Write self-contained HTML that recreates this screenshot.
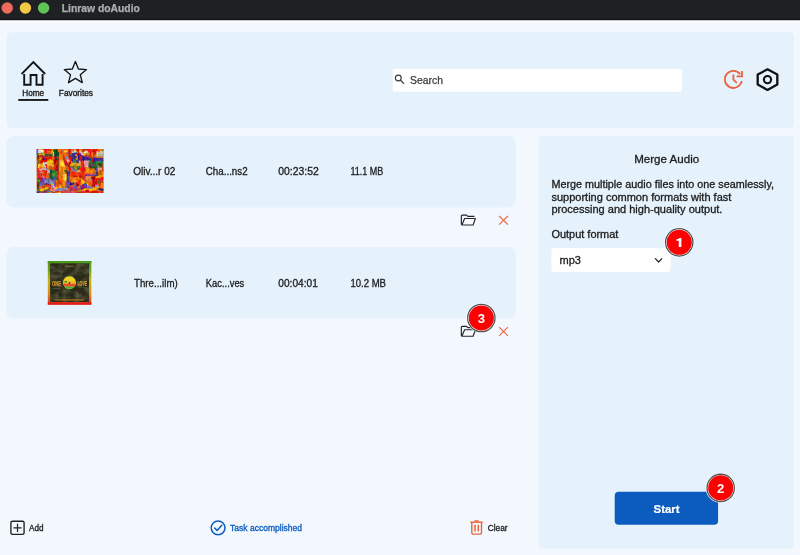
<!DOCTYPE html>
<html><head><meta charset="utf-8">
<style>
html,body{margin:0;padding:0;background:#f3f8fe;overflow:hidden}
svg{display:block;will-change:transform;opacity:0.9999}
text{font-family:"Liberation Sans",sans-serif}
</style></head>
<body>
<svg width="800" height="555" viewBox="0 0 800 555">
<defs>
<filter id="bl" x="-5%" y="-5%" width="110%" height="110%" color-interpolation-filters="sRGB">
<feTurbulence type="fractalNoise" baseFrequency="0.13 0.1" numOctaves="2" seed="11" result="d"/>
<feDisplacementMap in="SourceGraphic" in2="d" scale="5" xChannelSelector="R" yChannelSelector="G" result="dm"/>
<feGaussianBlur in="dm" stdDeviation="0.55" result="b"/>
<feTurbulence type="fractalNoise" baseFrequency="0.3 0.22" numOctaves="2" seed="7" result="n"/>
<feColorMatrix in="n" type="matrix" values="2.2 0 0 0 -0.6  0 2.2 0 0 -0.6  0 0 2.2 0 -0.6  0 0 0 0 1" result="n2"/>
<feComposite in="b" in2="n2" operator="arithmetic" k1="0" k2="1" k3="0.3" k4="-0.17"/>
</filter>
<clipPath id="c1"><rect x="0" y="0" width="67" height="44"/></clipPath>
<linearGradient id="gb" x1="0" y1="0" x2="0" y2="1">
<stop offset="0" stop-color="#4c9a1c"/><stop offset="0.2" stop-color="#6ea01c"/><stop offset="0.45" stop-color="#c8b41c"/><stop offset="0.75" stop-color="#e08a18"/><stop offset="0.93" stop-color="#e4481a"/><stop offset="1" stop-color="#e01818"/>
</linearGradient>
<linearGradient id="gt" x1="0" y1="0" x2="0" y2="1">
<stop offset="0" stop-color="#7a8c20"/><stop offset="0.3" stop-color="#c8b020"/><stop offset="0.6" stop-color="#e89a20"/><stop offset="1" stop-color="#e44420"/>
</linearGradient>
<clipPath id="cc"><circle cx="69.45" cy="282.5" r="6.3"/></clipPath>
<filter id="tx" x="0" y="0" width="100%" height="100%" color-interpolation-filters="sRGB">
<feTurbulence type="fractalNoise" baseFrequency="0.16" numOctaves="2" seed="3" result="n"/>
<feColorMatrix in="n" type="matrix" values="0 0 0 0 0.42  0 0 0 0 0.42  0 0 0 0 0.32  1.6 0 0 0 -0.62"/>
<feComposite in2="SourceGraphic" operator="in"/>
</filter>
</defs>
<!-- background -->
<rect x="0" y="0" width="800" height="555" fill="#f3f8fe"/>
<!-- title bar -->
<rect x="0" y="0" width="800" height="20.4" fill="#1f2023"/>
<rect x="0" y="18.6" width="800" height="1.8" fill="#141517"/>
<rect x="0" y="20.4" width="800" height="1.6" fill="#ffffff"/>
<circle cx="7.2" cy="8" r="5.7" fill="#ed6a5e"/>
<circle cx="25.4" cy="8" r="5.7" fill="#f6c944"/>
<circle cx="43.6" cy="8" r="5.7" fill="#5fc454"/>
<text x="61.7" y="11.8" font-size="10.3" font-weight="bold" fill="#adaeb1" stroke="#adaeb1" stroke-width="0.25" textLength="78.2" lengthAdjust="spacingAndGlyphs">Linraw doAudio</text>
<!-- panels -->
<rect x="6.5" y="32.3" width="787.4" height="95.7" rx="4.5" fill="#e5f2fc"/>
<rect x="6.5" y="136" width="509.3" height="71.6" rx="7" fill="#e5f2fc"/>
<rect x="6.5" y="247" width="509.3" height="71.5" rx="7" fill="#e5f2fc"/>
<rect x="539" y="136" width="254.9" height="412.5" rx="3" fill="#e5f2fc"/>

<!-- header icons -->
<g fill="none" stroke="#141414" stroke-width="1.9" stroke-linejoin="miter" stroke-linecap="square">
<path d="M22.2,73.3 L33.35,62 L44.5,73.3"/>
<path d="M24.2,74 V84.7 H30.6 V75 H36.5 V84.7 H42.6 V74" stroke-linecap="butt"/>
</g>
<polygon points="75.40,61.50 78.43,69.04 86.53,69.58 80.30,74.79 82.28,82.67 75.40,78.35 68.52,82.67 70.50,74.79 64.27,69.58 72.37,69.04" fill="none" stroke="#141414" stroke-width="1.35" stroke-linejoin="round"/>
<text x="22.2" y="95.8" font-size="8.2" fill="#1a1a1a" stroke="#1a1a1a" stroke-width="0.33" textLength="22" lengthAdjust="spacingAndGlyphs">Home</text>
<text x="58.8" y="95.8" font-size="8.2" fill="#1a1a1a" stroke="#1a1a1a" stroke-width="0.33" textLength="34.2" lengthAdjust="spacingAndGlyphs">Favorites</text>
<rect x="18.3" y="99" width="30" height="1.9" fill="#1a1a1a"/>
<!-- search -->
<rect x="392.7" y="68.7" width="289.2" height="23.1" rx="3" fill="#ffffff"/>
<circle cx="398.3" cy="78" r="2.9" fill="none" stroke="#3a3a3a" stroke-width="1.15"/>
<path d="M400.5,80.2 L403.7,83.4" stroke="#3a3a3a" stroke-width="1.25" stroke-linecap="round"/>
<text x="410" y="84.3" font-size="10.5" fill="#3c3c3c" stroke="#3c3c3c" stroke-width="0.25" textLength="33" lengthAdjust="spacingAndGlyphs">Search</text>
<!-- clock icon -->
<g fill="none" stroke="#e8633c" stroke-width="1.8" stroke-linecap="butt">
<path d="M741.76,81.18 A8.55,8.55 0 1 1 740.14,74.14"/>
<path d="M742,70.9 V76.3 H736.6" stroke-linejoin="miter"/>
<path d="M733.4,74.4 V79.6 L736.8,82.8"/>
</g>
<!-- hex icon -->
<g fill="none" stroke="#111" stroke-width="2.3" stroke-linejoin="round">
<polygon points="767.5,69.3 777.3,74.6 777.3,84.6 767.5,89.9 757.7,84.6 757.7,74.6"/>
<circle cx="767.5" cy="79.6" r="3.6" stroke-width="2.1"/>
</g>


<!-- thumb 1: painting -->
<g transform="translate(36.6,149.1)" clip-path="url(#c1)">
<g filter="url(#bl)">
<rect x="-2" y="-2" width="71" height="48" fill="#ea6c1a"/>
<rect x="0" y="0" width="2.3" height="5.6" fill="#3424a0"/>
<rect x="2.1" y="0.5" width="4.6" height="4.4" fill="#e6e2d4"/>
<rect x="6.2" y="0" width="8.6" height="4" fill="#e41a10"/>
<rect x="9" y="1.5" width="4" height="2" fill="#f08a14"/>
<rect x="12.9" y="2.4" width="4.6" height="4.8" fill="#f6c414"/>
<rect x="0.5" y="4.6" width="14.5" height="3" fill="#4c5a2c"/>
<rect x="3" y="5.2" width="4" height="1.6" fill="#d8c020"/>
<rect x="8" y="5.6" width="3" height="1.6" fill="#3a3a98"/>
<rect x="0" y="7.4" width="15" height="3.4" fill="#7a3a30"/>
<rect x="4" y="7.2" width="10.5" height="6.2" fill="#e01c10"/>
<rect x="6" y="9" width="4" height="1.6" fill="#3e3a90"/>
<rect x="2" y="9.5" width="3" height="2" fill="#f0c020"/>
<rect x="0" y="10.6" width="4" height="4.6" fill="#e05818"/>
<rect x="0.3" y="12" width="1.8" height="6" fill="#3a6a30"/>
<rect x="11.6" y="11.4" width="5.8" height="5.6" fill="#f6c414"/>
<rect x="2" y="15" width="5.6" height="3.2" fill="#f4c018"/>
<rect x="7.5" y="13.2" width="4.2" height="5" fill="#d8d0c0"/>
<rect x="9.5" y="15" width="2" height="7" fill="#e03018"/>
<rect x="0" y="18.4" width="3" height="3" fill="#d02818"/>
<rect x="3" y="18.5" width="6" height="2.4" fill="#e8a8a0"/>
<rect x="8.5" y="19.5" width="3" height="2.5" fill="#8a90c8"/>
<rect x="12" y="17" width="5" height="4" fill="#e86a20"/>
<rect x="16.6" y="0.4" width="5.8" height="7.6" fill="#1c4a2a"/>
<rect x="17" y="7" width="5" height="16" fill="#d41a10"/>
<rect x="18.2" y="8" width="1.2" height="14" fill="#2a5a30"/>
<rect x="20.6" y="6" width="1.2" height="15" fill="#2c5a2c"/>
<rect x="22.4" y="3.4" width="6" height="20" fill="#f6900e"/>
<rect x="23.8" y="10" width="4.4" height="8" fill="#f8d23c"/>
<rect x="22.4" y="0" width="9.4" height="4.6" fill="#ea5a18"/>
<rect x="24.4" y="1.6" width="1.6" height="1.6" fill="#3a8a40"/>
<rect x="28.4" y="1.2" width="3" height="2" fill="#f0b020"/>
<rect x="28.4" y="4.8" width="3.6" height="5" fill="#e88a28"/>
<rect x="28.6" y="7.5" width="3.2" height="4" fill="#8a84c4"/>
<rect x="28.8" y="11" width="3" height="4" fill="#e8e0d8"/>
<rect x="28.4" y="14.5" width="3.6" height="4.5" fill="#e46a38"/>
<path d="M26,5 L28,5 L32,16 L30,16 Z" fill="#e02414"/>
<path d="M31.9,0 H34.6 L34.2,23 H32.2 Z" fill="#e41410"/>
<rect x="35.5" y="2.4" width="5" height="2.6" fill="#c4d8b4"/>
<rect x="43.5" y="2.2" width="3.4" height="4.4" fill="#d0d8c0"/>
<rect x="46.6" y="0" width="15.4" height="2.8" fill="#e41a10"/>
<rect x="48" y="2.6" width="6" height="2.6" fill="#e8c8b0"/>
<rect x="59.9" y="1.6" width="6.8" height="5.8" fill="#c8d0b0"/>
<rect x="62" y="2" width="1.2" height="4.6" fill="#e8b0a0"/>
<rect x="65.6" y="0.6" width="1.2" height="1.4" fill="#30a040"/>
<rect x="65.4" y="2" width="1.2" height="5.4" fill="#b89850"/>
<path d="M34.6,5 L43.5,4.2 L46,6.5 L52,8.4 L67,9.2 V12 L52,12.6 L44,12 L40,13.6 L34.6,13 Z" fill="#3a2a94"/>
<rect x="39" y="6" width="2.2" height="5" fill="#e8a020"/>
<rect x="47" y="4.8" width="6" height="1.4" fill="#e8a818"/>
<rect x="36" y="10" width="3.6" height="3.4" fill="#2a7a50"/>
<rect x="42.3" y="11.4" width="10" height="6.6" fill="#e8aaa0"/>
<rect x="44" y="12" width="3" height="2" fill="#f0d8c8"/>
<rect x="34.6" y="13.4" width="9.6" height="3.6" fill="#f09a18"/>
<rect x="34.8" y="16.8" width="9" height="3.6" fill="#4a6a48"/>
<rect x="37" y="17.4" width="3" height="2" fill="#f0b418"/>
<rect x="40" y="19.8" width="4" height="2.4" fill="#f4c020"/>
<rect x="34.6" y="20.4" width="6" height="2.2" fill="#8a88c0"/>
<path d="M40,0 H42.4 Q46.2,8 47.4,23 L48,31 H46 L45.4,23 Q44.4,9 40,0 Z" fill="#e81810"/>
<path d="M51.8,2 L54.2,2 L58.4,13 L56,13.4 Z" fill="#e81810"/>
<path d="M57.5,3 L59.2,3 L58.4,8 L57,8 Z" fill="#e02418"/>
<path d="M51.4,12.6 L60,11.6 L67,12 V20 L60,21 L54,20.8 L50.6,17.6 Z" fill="#3a5a30"/>
<rect x="60" y="11.8" width="6.8" height="2.6" fill="#2a8a50"/>
<rect x="54" y="15" width="4" height="2" fill="#4a3a80"/>
<rect x="58.5" y="18.6" width="2" height="9" fill="#4838a0"/>
<rect x="48.4" y="19.4" width="9.8" height="3.6" fill="#f08812"/>
<rect x="61" y="18.4" width="5.8" height="5.8" fill="#e8a070"/>
<rect x="65.4" y="16" width="1.4" height="10" fill="#e02818"/>
<rect x="61.6" y="21" width="4.6" height="3" fill="#ec5a14"/>
<rect x="0.3" y="21" width="9.6" height="10.8" fill="#e8341c"/>
<rect x="2.5" y="22" width="3.4" height="2" fill="#9088c0"/>
<rect x="3" y="25" width="5" height="4" fill="#f06444"/>
<rect x="3.4" y="24.6" width="1.6" height="1.6" fill="#503040"/>
<rect x="0.2" y="29" width="2.2" height="12" fill="#4a5a28"/>
<rect x="0.4" y="31" width="1.6" height="2" fill="#40a040"/>
<rect x="13.1" y="20.8" width="7.2" height="12" fill="#2a7040"/>
<rect x="15" y="24" width="3" height="5" fill="#3a8a50"/>
<rect x="10" y="21" width="3.4" height="3" fill="#b0a8d0"/>
<rect x="9.8" y="26" width="3.6" height="2.6" fill="#e84020"/>
<rect x="20.2" y="21" width="9.6" height="15.6" fill="#f0820e"/>
<rect x="20.4" y="22" width="2.2" height="10" fill="#e0301a"/>
<rect x="25.4" y="25.6" width="4.8" height="5.8" fill="#f8d430"/>
<rect x="27.6" y="22" width="3" height="3.4" fill="#4a5a30"/>
<rect x="22.6" y="31" width="3.4" height="4" fill="#e85a18"/>
<rect x="3.6" y="29.5" width="15.7" height="7.5" fill="#5c46ae"/>
<rect x="8" y="30.6" width="8" height="4" fill="#9488cc"/>
<rect x="11" y="31.6" width="2.4" height="1.4" fill="#4a8a50"/>
<rect x="14" y="33.7" width="3" height="1.9" fill="#f6c018"/>
<rect x="9" y="35.6" width="5" height="2" fill="#c02020"/>
<rect x="2.4" y="34" width="3" height="4" fill="#6a5ab8"/>
<ellipse cx="8.1" cy="40.3" rx="4.8" ry="1.7" fill="#2c2478"/>
<ellipse cx="8.1" cy="40.2" rx="4.2" ry="1.2" fill="#f4b812"/>
<rect x="14.5" y="35.6" width="3.8" height="6.2" fill="#c8b0c8"/>
<rect x="15.2" y="38" width="2" height="3.4" fill="#e07060"/>
<rect x="18.3" y="37" width="6.8" height="1.8" fill="#f4c018"/>
<rect x="18.3" y="38.8" width="12.4" height="3.4" fill="#9088c8"/>
<path d="M30.6,22.3 H33.4 L32.6,39 H29.6 Z" fill="#5040a2"/>
<rect x="33.6" y="22" width="1.4" height="9" fill="#e83018"/>
<rect x="33.4" y="22.8" width="13.2" height="13.8" fill="#f0740e"/>
<rect x="36" y="22.6" width="10.6" height="5.4" fill="#e8240e"/>
<rect x="34" y="28" width="6" height="5" fill="#f48c10"/>
<rect x="40" y="30" width="5" height="4" fill="#ec4a12"/>
<rect x="33" y="33" width="4" height="3" fill="#3a2a80"/>
<rect x="37" y="34.4" width="6" height="2.6" fill="#c02828"/>
<rect x="48.5" y="25.2" width="9.6" height="1.8" fill="#5a48b0"/>
<rect x="50.4" y="26.8" width="4.8" height="5.2" fill="#e8705c"/>
<rect x="46.6" y="27" width="3.6" height="6" fill="#e8402a"/>
<rect x="54.7" y="27.4" width="3.9" height="9.6" fill="#c41818"/>
<rect x="59" y="27" width="7.8" height="2.2" fill="#f0a818"/>
<rect x="59" y="29" width="7.4" height="6.4" fill="#e02414"/>
<rect x="62" y="31" width="2" height="2" fill="#3a6a38"/>
<rect x="59.4" y="34.6" width="3.4" height="2.4" fill="#8a80c0"/>
<rect x="65.2" y="33" width="1.6" height="5" fill="#f0a020"/>
<path d="M43.6,31 L45.6,30 L50.6,37 L48,38.4 Z" fill="#f6c010"/>
<rect x="43.7" y="36" width="5.7" height="4" fill="#5a48b0"/>
<rect x="44.4" y="36.6" width="2" height="2" fill="#c02020"/>
<rect x="50" y="37.6" width="6" height="3.2" fill="#8c84c8"/>
<path d="M43,42.4 L52,39.8 L63.6,36.4 L64.4,38.6 L54,42 L46,43.6 Z" fill="#f4b410"/>
<rect x="62" y="38.4" width="5" height="3.4" fill="#3a2a70"/>
<rect x="33" y="38.6" width="10" height="3" fill="#c83040"/>
<rect x="36" y="37" width="5" height="2.4" fill="#7060b8"/>
<rect x="0" y="42" width="67" height="2" fill="#dc2418"/>
<rect x="0" y="41.8" width="4" height="2.2" fill="#40309a"/>
<rect x="4" y="42.4" width="12" height="1.6" fill="#7060b8"/>
<rect x="26" y="41.2" width="16" height="2.8" fill="#e8404a"/>
<rect x="18" y="42.6" width="6" height="1.4" fill="#f0a020"/>
</g></g>
<!-- thumb 2: one love -->
<rect x="47.8" y="261" width="43.5" height="43.6" fill="url(#gb)"/>
<rect x="47.8" y="261" width="43.5" height="2.4" fill="#4c9a1c"/>
<rect x="47.8" y="302.6" width="43.5" height="2" fill="#e01c18"/>
<rect x="50.1" y="263.3" width="38.9" height="38.7" fill="#2b2a19"/>
<rect x="50.1" y="263.3" width="38.9" height="38.7" fill="#000" filter="url(#tx)"/>
<circle cx="69.45" cy="282.5" r="6.6" fill="#3a8a2c"/>
<circle cx="69.45" cy="282.5" r="6.3" fill="#f0d224"/>
<g clip-path="url(#cc)">
<rect x="60" y="281" width="20" height="2.8" fill="#f0b42c"/>
<rect x="60" y="283.7" width="20" height="3.1" fill="#e8502c"/>
<rect x="60" y="286.7" width="20" height="3" fill="#34bc40"/>
<rect x="64.5" y="280.9" width="2.6" height="1.5" fill="#3a9a30"/>
<rect x="68.8" y="282" width="1.3" height="2.2" fill="#5a3a18"/>
</g>
<text x="52.1" y="285.8" font-size="7.8" font-weight="bold" fill="url(#gt)" stroke="url(#gt)" stroke-width="0.2" textLength="8.8" lengthAdjust="spacingAndGlyphs">ONE</text>
<text x="77.4" y="285.8" font-size="7.8" font-weight="bold" fill="url(#gt)" stroke="url(#gt)" stroke-width="0.2" textLength="9.9" lengthAdjust="spacingAndGlyphs">LOVE</text>
<rect x="52.5" y="288.2" width="8" height="0.9" fill="#7a8aa0" opacity="0.45"/>
<rect x="77.5" y="287.2" width="9.5" height="0.9" fill="#3a7a30" opacity="0.5"/>
<rect x="65" y="265.6" width="9" height="1.2" fill="#a87820" opacity="0.6"/>
<rect x="55" y="299.3" width="29" height="1.3" fill="#b87a20" opacity="0.85"/>
<!-- row text -->
<g font-size="10.1" fill="#1c1c1c" stroke="#1c1c1c" stroke-width="0.3">
<text x="133.3" y="175.3" textLength="42" lengthAdjust="spacingAndGlyphs">Oliv...r 02</text>
<text x="205.8" y="175.3" textLength="41.8" lengthAdjust="spacingAndGlyphs">Cha...ns2</text>
<text x="278.3" y="175.3" textLength="40.5" lengthAdjust="spacingAndGlyphs">00:23:52</text>
<text x="350.4" y="175.3" textLength="32.8" lengthAdjust="spacingAndGlyphs">11.1 MB</text>
<text x="134" y="286.7" textLength="43.7" lengthAdjust="spacingAndGlyphs">Thre...ilm)</text>
<text x="205.8" y="286.7" textLength="38.5" lengthAdjust="spacingAndGlyphs">Kac...ves</text>
<text x="278.3" y="286.7" textLength="39.5" lengthAdjust="spacingAndGlyphs">00:04:01</text>
<text x="350.4" y="286.7" textLength="35.6" lengthAdjust="spacingAndGlyphs">10.2 MB</text>
</g>
<!-- row icons -->
<g fill="none" stroke="#242424" stroke-width="1.15" stroke-linejoin="round" stroke-linecap="round">
<path d="M461.35,224.3 V216.1 Q461.35,215.15 462.3,215.15 H466.5 L467.8,216.35 H474.1"/>
<path d="M461.9,225 L464.6,218.5 H475.4 L473.1,225 Z" fill="#f8fbff"/>
</g>
<path d="M499.1,216 L507.9,224.6 M507.9,216 L499.1,224.6" stroke="#ea6a48" stroke-width="1.15" fill="none"/>
<g fill="none" stroke="#242424" stroke-width="1.15" stroke-linejoin="round" stroke-linecap="round" transform="translate(0,111.2)">
<path d="M461.35,224.3 V216.1 Q461.35,215.15 462.3,215.15 H466.5 L467.8,216.35 H474.1"/>
<path d="M461.9,225 L464.6,218.5 H475.4 L473.1,225 Z" fill="#f8fbff"/>
</g>
<path d="M499.1,327.2 L507.9,335.8 M507.9,327.2 L499.1,335.8" stroke="#ea6a48" stroke-width="1.15" fill="none"/>
<!-- right panel -->
<text x="634.2" y="163" font-size="11.1" fill="#1c1c1c" stroke="#1c1c1c" stroke-width="0.3" textLength="65" lengthAdjust="spacingAndGlyphs">Merge Audio</text>
<g font-size="10.45" fill="#1c1c1c" stroke="#1c1c1c" stroke-width="0.3">
<text x="551.4" y="188.1" textLength="222.6" lengthAdjust="spacingAndGlyphs">Merge multiple audio files into one seamlessly,</text>
<text x="551.4" y="200.5" textLength="180" lengthAdjust="spacingAndGlyphs">supporting common formats with fast</text>
<text x="551.4" y="212.6" textLength="171" lengthAdjust="spacingAndGlyphs">processing and high-quality output.</text>
<text x="551.4" y="237.7" textLength="67" lengthAdjust="spacingAndGlyphs">Output format</text>
</g>
<rect x="551.4" y="248.1" width="119.2" height="23.8" rx="3" fill="#ffffff"/>
<text x="559.5" y="263.9" font-size="11" fill="#1c1c1c" stroke="#1c1c1c" stroke-width="0.3">mp3</text>
<path d="M655.4,258.7 L658.6,262 L661.8,258.7" fill="none" stroke="#222" stroke-width="1.2" stroke-linecap="round" stroke-linejoin="round"/>
<rect x="614.7" y="491.8" width="103.4" height="32.9" rx="4" fill="#0b5cbe"/>
<text x="653.6" y="512.6" font-size="11.5" font-weight="bold" fill="#ffffff" stroke="#ffffff" stroke-width="0.2" textLength="26" lengthAdjust="spacingAndGlyphs">Start</text>
<!-- bottom bar -->
<rect x="10.9" y="521.25" width="13.2" height="13.1" rx="1.5" fill="none" stroke="#222" stroke-width="1.35"/>
<path d="M17.5,523.7 V532.1 M13.4,527.9 H21.6" stroke="#222" stroke-width="1.2" fill="none"/>
<text x="29" y="531.25" font-size="8.3" fill="#1c1c1c" stroke="#1c1c1c" stroke-width="0.3" textLength="14.5" lengthAdjust="spacingAndGlyphs">Add</text>
<circle cx="218.1" cy="527.8" r="6.9" fill="none" stroke="#0b5cbe" stroke-width="1.5"/>
<path d="M214.6,528 L217.1,530.5 L221.8,525.3" fill="none" stroke="#0b5cbe" stroke-width="1.5" stroke-linecap="round" stroke-linejoin="round"/>
<text x="230" y="531.25" font-size="8.3" fill="#0b5cbe" stroke="#0b5cbe" stroke-width="0.3" textLength="72" lengthAdjust="spacingAndGlyphs">Task accomplished</text>
<g fill="none" stroke="#e8633c" stroke-width="1.4">
<path d="M470.2,522.2 H482.8"/>
<path d="M474.6,521.6 Q474.6,520.9 475.3,520.9 H477.7 Q478.4,520.9 478.4,521.6"/>
<path d="M471.8,522.6 V533 Q471.8,534.1 472.9,534.1 H480.4 Q481.5,534.1 481.5,533 V522.6"/>
<path d="M475,524.8 V531.4 M478.3,524.8 V531.4" stroke-width="1.5"/>
</g>
<text x="487.7" y="531.25" font-size="8.3" fill="#1c1c1c" stroke="#1c1c1c" stroke-width="0.3" textLength="19.9" lengthAdjust="spacingAndGlyphs">Clear</text>
<!-- badges -->
<g font-weight="bold" font-size="13.1" fill="#fff" text-anchor="middle">
<circle cx="679.25" cy="242.3" r="15" fill="#ffffff" opacity="0.9"/><circle cx="679.25" cy="242.3" r="13.6" fill="none" stroke="#50555a" stroke-width="1.45"/><circle cx="679.25" cy="242.3" r="12.95" fill="#fbe9e9"/><circle cx="679.25" cy="242.3" r="12.55" fill="#fb0000"/>
<path transform="translate(679.25,242.3)" d="M2.15,4.75 H-0.5 V-1.55 H-2.9 V-3.05 Q-0.6,-3.1 0.25,-4.35 H2.15 Z" fill="#fff"/>
<circle cx="720.7" cy="487.9" r="15" fill="#ffffff" opacity="0.9"/><circle cx="720.7" cy="487.9" r="13.6" fill="none" stroke="#50555a" stroke-width="1.45"/><circle cx="720.7" cy="487.9" r="12.95" fill="#fbe9e9"/><circle cx="720.7" cy="487.9" r="12.55" fill="#fb0000"/>
<text x="720.65" y="493.05">2</text>
<circle cx="481.35" cy="318.0" r="15" fill="#ffffff" opacity="0.9"/><circle cx="481.35" cy="318.0" r="13.6" fill="none" stroke="#50555a" stroke-width="1.45"/><circle cx="481.35" cy="318.0" r="12.95" fill="#fbe9e9"/><circle cx="481.35" cy="318.0" r="12.55" fill="#fb0000"/>
<text x="481.45" y="323.05">3</text>
</g>
</svg>
</body></html>
